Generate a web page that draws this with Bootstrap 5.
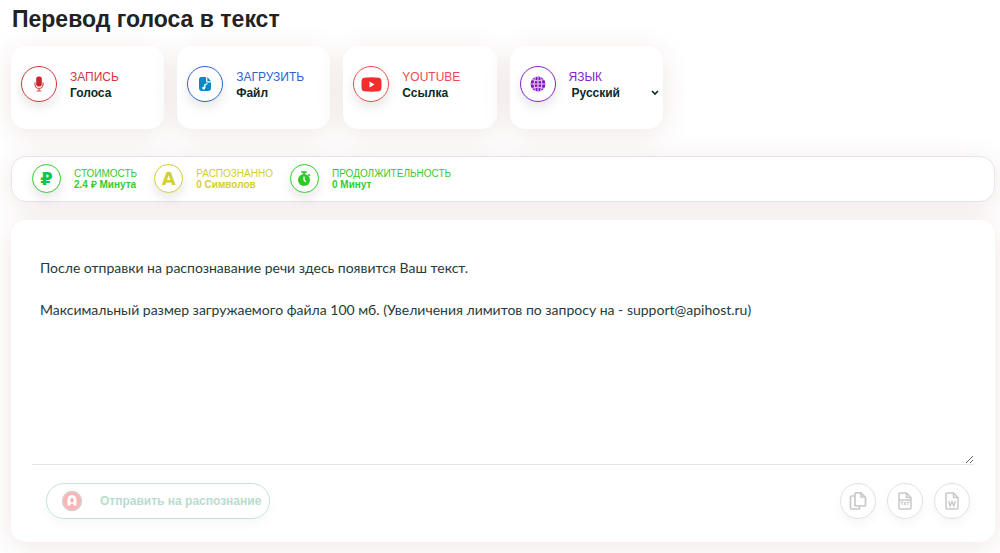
<!DOCTYPE html>
<html lang="ru">
<head>
<meta charset="utf-8">
<meta name="viewport" content="width=device-width, initial-scale=1">
<title>Перевод голоса в текст</title>
<link href="https://cdn.jsdelivr.net/npm/bootstrap@5.3.0/dist/css/bootstrap.min.css" rel="stylesheet">
<style>
body{font-family:"Liberation Sans",Arial,sans-serif;background:#fff;color:#222;overflow-x:hidden}
.page{padding:4px 5px 11px 11px}
.title{font-size:23px;line-height:30px;font-weight:700;margin:0 0 12px;padding-left:1px}
.tiles{display:grid;grid-template-columns:repeat(auto-fill,minmax(150px,1fr));gap:13px;margin-bottom:27px}
.panel{background:#fff;border-radius:15px;box-shadow:0 5px 30px rgba(120,20,20,.1);border:0}
.tile{height:83px;padding:20px 4px 0 10px;gap:13px;text-align:left;color:#0b2a26}
.ring{flex:none;display:flex;align-items:center;justify-content:center;width:36px;height:36px;border:1px solid currentColor;border-radius:50%;background:#fff;box-shadow:0 5px 12px rgba(0,0,0,.1)}
.ring-sm{width:29px;height:29px}
.glyph{font-family:"DejaVu Sans",sans-serif;font-weight:700;font-size:18px;line-height:18px}
.cap{display:block;font-size:12px;line-height:16px}
.val{display:block;font-size:12px;line-height:16px;font-weight:700;color:#0b2a26}
.tile-text{padding-top:3px}
.lang{appearance:none;border:0;background:transparent;width:100%;padding:0 0 0 3px;outline:0}
.lang-box{display:flex;align-items:center}
.red{color:#d0383c}.blue{color:#2c62cf}.tube{color:#f04a4a}.violet{color:#8a22c4}
.green{color:#35ca2e}.olive{color:#d3cf31}.emerald{color:#14c44c}
.stats{border:1px solid #e6e6ea;padding:7px 20px 8px;gap:17px;margin-bottom:18px}
.stat{gap:13px}
.stat .cap{font-size:10px;line-height:11px}
.stat .val{font-size:10px;line-height:11px;color:inherit}
.editor{padding:26px 21px 23px}
.result{display:block;width:100%;height:219px;border:0;border-bottom:1px solid #e6e6e6;outline:0;padding:11px 8px;font-family:Lato,sans-serif;font-size:14px;line-height:21px;color:#243c3a;resize:vertical;background:transparent}
.tools{padding:18px 4px 0 14px}
.downloads{gap:11px}
.send{height:36px;width:224px;border:1px solid #c5e3d8;border-radius:18px;background:#fff;color:#b8dccf;font-size:12px;font-weight:700;padding:0 14px;gap:17px;box-shadow:0 5px 12px rgba(0,0,0,.03)}
.tool{border-color:#e2e2e2;padding:0;color:#c9c9c9;box-shadow:0 5px 12px rgba(0,0,0,.04)}
</style>
</head>
<body>
<main class="container-fluid page">
  <h1 class="title">Перевод голоса в текст</h1>

  <div class="tiles">
    <button type="button" class="panel tile d-flex align-items-start">
      <span class="ring red"><svg width="10" height="16" viewBox="0 0 10 16" aria-hidden="true"><rect x="2.2" y="0.5" width="5.6" height="10" rx="2.3" fill="#c9262b"/><path d="M1 6.5v2a4 4 0 0 0 8 0v-2M5 12.5V15M2.6 15h4.8" fill="none" stroke="#d64a4d" stroke-width="1.2"/></svg></span>
      <span class="tile-text"><span class="cap red">ЗАПИСЬ</span><span class="val">Голоса</span></span>
    </button>
    <button type="button" class="panel tile d-flex align-items-start">
      <span class="ring blue"><svg width="14" height="16" viewBox="0 0 14 16" aria-hidden="true"><path d="M3 1h5v4q0 1.500 1.500 1.500H13V12q0 3-3 3H4q-3 0-3-3V4q0-3 2-3z" fill="#0b86c6"/><path d="M9.300 1L13 5.200H9.300z" fill="#0b86c6"/><path d="M9.500 7.500L6.800 8.800V12" fill="none" stroke="#fff" stroke-width="1.300"/><circle cx="5.700" cy="12" r="1.500" fill="#fff"/></svg></span>
      <span class="tile-text"><span class="cap blue">ЗАГРУЗИТЬ</span><span class="val">Файл</span></span>
    </button>
    <button type="button" class="panel tile d-flex align-items-start">
      <span class="ring tube"><svg width="21" height="15" viewBox="0 0 21 15" aria-hidden="true"><path d="M3 .700Q10.500-.100 18 .700 20 1 20.300 3q.500 4.500 0 9-.300 2-2.300 2.300-7.500.800-15 0Q1 14 .700 12 .200 7.500.700 3 1 1 3 .700z" fill="#f52c2e"/><path d="M8.500 4.500v6l5-3z" fill="#fff"/></svg></span>
      <span class="tile-text"><span class="cap tube">YOUTUBE</span><span class="val">Ссылка</span></span>
    </button>
    <div class="panel tile d-flex align-items-start">
      <span class="ring violet"><svg width="16" height="16" viewBox="0 0 16 16" aria-hidden="true"><circle cx="8" cy="8" r="7.500" fill="#8516c4"/><path d="M8 0v16M0 8h16M1.500 3.500q6.500 3 13 0M1.500 12.500q6.500-3 13 0M5.500.500q-3 7.500 0 15M10.500.500q3 7.500 0 15" fill="none" stroke="#f0dcfa" stroke-width=".900"/></svg></span>
      <span class="tile-text flex-grow-1"><label class="cap violet" for="lang">ЯЗЫК</label>
        <span class="lang-box"><select class="lang val" id="lang"><option>Русский</option><option>English</option></select><svg class="flex-shrink-0" width="8" height="6" viewBox="0 0 8 6" aria-hidden="true"><path d="M1 1l3 3 3-3" fill="none" stroke="#0b2a26" stroke-width="1.600"/></svg></span></span>
    </div>
  </div>

  <section class="panel stats d-flex flex-wrap">
    <div class="stat d-flex align-items-center green">
      <span class="ring ring-sm"><span class="glyph emerald" aria-hidden="true">₽</span></span>
      <span><span class="cap">СТОИМОСТЬ</span><span class="val">2.4 ₽ Минута</span></span>
    </div>
    <div class="stat d-flex align-items-center olive">
      <span class="ring ring-sm"><span class="glyph" aria-hidden="true">A</span></span>
      <span><span class="cap">РАСПОЗНАННО</span><span class="val">0 Символов</span></span>
    </div>
    <div class="stat d-flex align-items-center green">
      <span class="ring ring-sm"><svg width="14" height="16" viewBox="0 0 14 16" aria-hidden="true"><circle cx="7" cy="9" r="6" fill="#2cca27"/><path d="M4.300 1.200h5.400M7 1v3M11.300 3.300l1.500 1.500" stroke="#2cca27" stroke-width="1.800"/><path d="M7 5.500V9l2 2" fill="none" stroke="#fff" stroke-width="1.300"/></svg></span>
      <span><span class="cap">ПРОДОЛЖИТЕЛЬНОСТЬ</span><span class="val">0 Минут</span></span>
    </div>
  </section>

  <section class="panel editor">
    <textarea class="result" aria-label="Текст">После отправки на распознавание речи здесь появится Ваш текст.

Максимальный размер загружаемого файла 100 мб. (Увеличения лимитов по запросу на - support@apihost.ru)</textarea>
    <div class="tools d-flex flex-wrap align-items-center gap-2">
      <button type="button" class="send d-flex align-items-center me-auto"><svg class="flex-shrink-0" width="22" height="22" viewBox="0 0 22 22" aria-hidden="true"><circle cx="11" cy="11" r="9.500" fill="#fbb4b5" stroke="#d8d0d0" stroke-width="1.500"/><path d="M8 15.500V9.500a3 3 0 0 1 6 0v6" fill="none" stroke="#fff" stroke-width="3"/><path d="M11 9v2.500" stroke="#f2a0a2" stroke-width="1.800"/><path d="M9 13h4" stroke="#fff" stroke-width="1.500"/></svg><span class="text-nowrap">Отправить на распознание</span></button>
      <div class="downloads d-flex">
        <button type="button" class="ring tool" aria-label="Копировать"><svg width="18" height="20" viewBox="0 0 18 20" fill="none" stroke="currentColor" stroke-width="1.700" aria-hidden="true"><path d="M6 5H2.500Q1.500 5 1.500 6v11q0 1 1 1h7q1 0 1-1v-2"/><path d="M12 1.800H7q-1 0-1 1V14q0 1 1 1h8.500q1 0 1-1V6.300zV6h4.500"/></svg></button>
        <button type="button" class="ring tool" aria-label="Скачать TXT"><svg width="14" height="18" viewBox="0 0 14 18" fill="none" stroke="currentColor" stroke-width="1.500" aria-hidden="true"><path d="M8.500 1H2Q1 1 1 2v14q0 1 1 1h10q1 0 1-1V5.500zv4.500H13M1 8h12"/><path d="M2.500 10.200h3M4 10v3M6 10l2 3M8 10l-2 3M8.600 10.200h3M10 10v3" stroke-width="1"/></svg></button>
        <button type="button" class="ring tool" aria-label="Скачать Word"><svg width="14" height="18" viewBox="0 0 14 18" fill="none" stroke="currentColor" stroke-width="1.500" aria-hidden="true"><path d="M8.500 1H2Q1 1 1 2v14q0 1 1 1h10q1 0 1-1V5.500zv4.500H13"/><path d="M3.700 9l1.500 5L7 9.500 8.800 14l1.500-5" stroke-width="1.400"/></svg></button>
      </div>
    </div>
  </section>
</main>
<script src="https://cdn.jsdelivr.net/npm/bootstrap@5.3.0/dist/js/bootstrap.bundle.min.js"></script>
</body>
</html>
